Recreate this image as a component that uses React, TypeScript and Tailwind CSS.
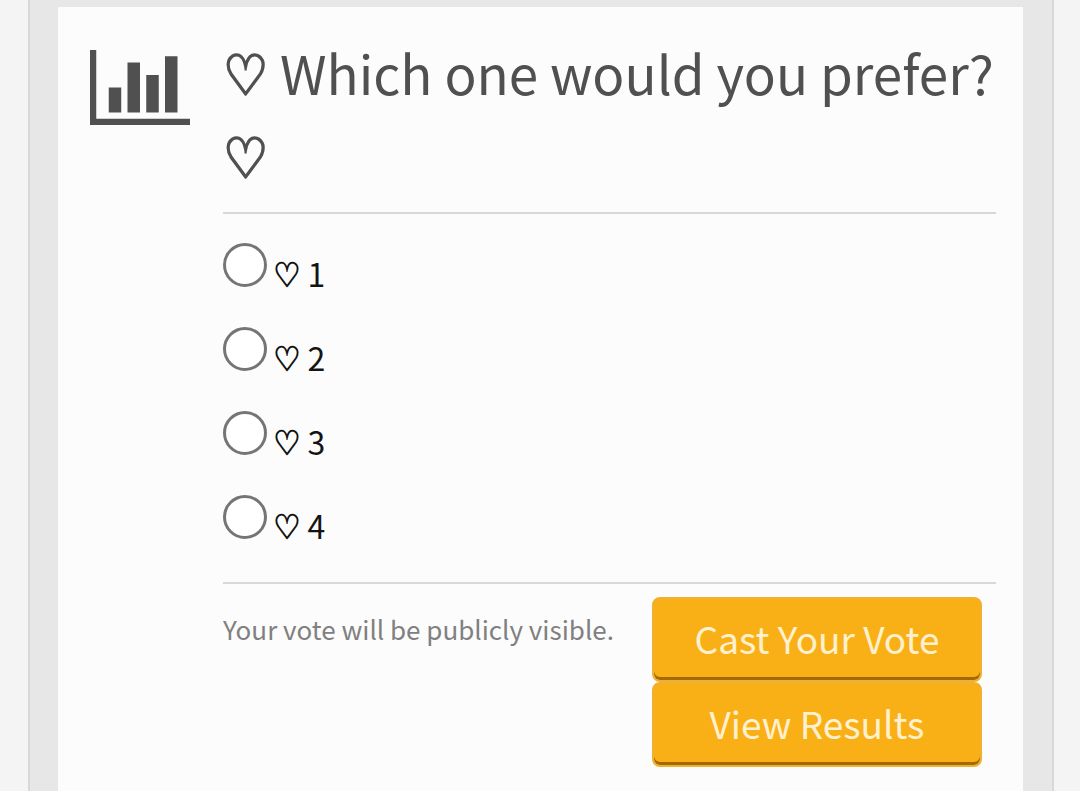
import { useState } from "react"

const options = [
  { id: "1", label: "1" },
  { id: "2", label: "2" },
  { id: "3", label: "3" },
  { id: "4", label: "4" },
]

function ChartIcon({ className }: { className?: string }) {
  return (
    <svg viewBox="0 0 16 12" fill="currentColor" aria-hidden="true" className={className}>
      <path d="M0 0h1v11h15v1H0z" />
      <path d="M3 6h2v4H3zM6 2h2v8H6zM9 4h2v6H9zM12 1h2v9h-2z" />
    </svg>
  )
}

function Heart({ className }: { className: string }) {
  return (
    <span className={`font-['DejaVu_Sans_Condensed','DejaVu_Sans',sans-serif] leading-none ${className}`}>♡</span>
  )
}

function PollButton({ type, children }: { type: "submit" | "button"; children: string }) {
  return (
    <button
      type={type}
      className="h-[85px] w-full rounded-lg border-2 border-[#f0b030] bg-[#f9b016] pb-0.5 text-[37px] leading-none text-[#fff0d0] shadow-[inset_0_-3px_0_#a36a04]"
    >
      {children}
    </button>
  )
}

export default function App() {
  const [choice, setChoice] = useState("")

  return (
    <div className="min-h-screen bg-[#f4f4f4] pr-[26px] pl-7 font-['Noto_Sans_CJK_JP',sans-serif]">
      <main className="flex min-h-screen flex-col border-x-2 border-[#d8d8d8] bg-[#e7e7e7] pt-[7px] pr-[29px] pl-7">
        <form
          onSubmit={(e) => e.preventDefault()}
          className="flex flex-1 items-start bg-[#fcfcfc] pt-6 pr-[27px] pl-8"
        >
          <ChartIcon className="mt-[19px] mr-[33px] w-[100px] shrink-0 text-[#505050]" />

          <div className="min-w-0 flex-1">
            <h1 className="border-b-2 border-[#d8d8d8] pb-[15px] text-[53px] leading-[83px] text-[#505050]">
              <Heart className="text-[56px] [-webkit-text-stroke:2px]" /> Which one would you prefer?{" "}
              <Heart className="text-[56px] [-webkit-text-stroke:2px]" />
            </h1>

            {/* Choices */}
            <ul className="flex flex-col gap-10 border-b-2 border-[#d8d8d8] pt-[29px] pb-[43px] text-[#141414]">
              {options.map((option) => (
                <li key={option.id} className="flex h-11 items-start gap-1.5">
                  <input
                    type="radio"
                    name="poll"
                    id={`option-${option.id}`}
                    value={option.id}
                    checked={choice === option.id}
                    onChange={() => setChoice(option.id)}
                    className="size-11 shrink-0 appearance-none rounded-full border-3 border-[#757575] bg-white checked:bg-[#757575]"
                  />
                  <label htmlFor={`option-${option.id}`} className="pt-1.5 text-[32px] leading-12">
                    <Heart className="text-[34px] [-webkit-text-stroke:1px]" /> {option.label}
                  </label>
                </li>
              ))}
            </ul>

            {/* Voting */}
            <div className="flex items-start justify-between pt-[13px] pr-3.5">
              <p className="pt-2.5 text-[26px] leading-11 text-[#808080]">Your vote will be publicly visible.</p>
              <div className="w-[330px] shrink-0">
                <PollButton type="submit">Cast Your Vote</PollButton>
                <PollButton type="button">View Results</PollButton>
              </div>
            </div>
          </div>
        </form>
      </main>
    </div>
  )
}
